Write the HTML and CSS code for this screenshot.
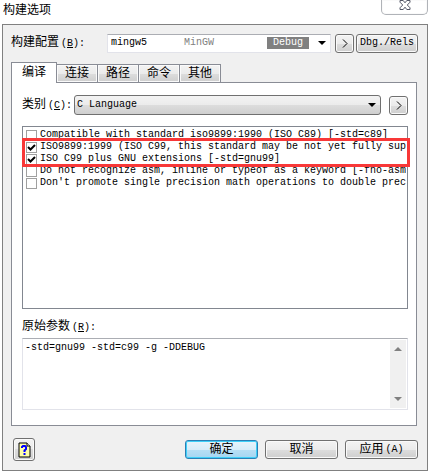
FILE: index.html
```html
<!DOCTYPE html>
<html lang="zh-CN">
<head>
    <meta charset="UTF-8">
    <meta name="viewport" content="width=device-width, initial-scale=1.0">
    <title>构建选项</title>
    <link rel="stylesheet" href="styles.css">
</head>
<body>
    <header class="titlebar">
        <h1>构建选项</h1>
        <button class="close-btn" aria-label="关闭">
            <svg width="12" height="10" viewBox="0 0 12 10">
                <path d="M1 .5h3.2L6 2.8 7.800.5H11v1.700L8.300 5 11 7.800v1.700H7.800L6 7.200 4.200 9.500H1V7.800L3.700 5 1 2.200z" fill="#fff" stroke="#535666"/>
            </svg>
        </button>
    </header>

    <main class="dialog">
        <div class="config-row">
            <label for="config">构建配置<span class="latin">(<u>B</u>):</span></label>
            <div class="config-combo">
                <select id="config">
                    <option>mingw5</option>
                </select>
                <div class="combo-info">
                    <span class="compiler">MinGW</span>
                    <span class="badge">Debug</span>
                    <svg class="arrow" width="8" height="4" viewBox="0 0 8 4"><path d="M0 0h8L4 4z"/></svg>
                </div>
            </div>
            <button class="more-btn" aria-label="更多"><svg width="6" height="9" viewBox="0 0 6 9"><path d="M1 .5l4 4-4 4" fill="none" stroke="#000"/></svg></button>
            <button class="toggle-btn">Dbg./Rels</button>
        </div>

        <div class="tabs" role="tablist">
            <button class="tab active" role="tab" aria-selected="true">编译</button>
            <button class="tab" role="tab">连接</button>
            <button class="tab" role="tab">路径</button>
            <button class="tab" role="tab">命令</button>
            <button class="tab" role="tab">其他</button>
        </div>

        <section class="panel" role="tabpanel">
            <div class="category-row">
                <label for="category">类别<span class="latin">(<u>C</u>):</span></label>
                <div class="category-combo">
                    <select id="category">
                        <option>C Language</option>
                    </select>
                    <div class="combo-info">
                        <svg class="arrow" width="8" height="4" viewBox="0 0 8 4"><path d="M0 0h8L4 4z"/></svg>
                    </div>
                </div>
                <button class="more-btn" aria-label="更多"><svg width="6" height="9" viewBox="0 0 6 9"><path d="M1 .5l4 4-4 4" fill="none" stroke="#000"/></svg></button>
            </div>

            <div class="options">
                <label class="option"><input type="checkbox"><span>Compatible with standard iso9899:1990 (ISO C89) [-std=c89]</span></label>
                <label class="option"><input type="checkbox" checked><span>ISO9899:1999 (ISO C99, this standard may be not yet fully sup</span></label>
                <label class="option"><input type="checkbox" checked><span>ISO C99 plus GNU extensions [-std=gnu99]</span></label>
                <label class="option"><input type="checkbox"><span>Do not recognize asm, inline or typeof as a keyword [-fno-asm</span></label>
                <label class="option"><input type="checkbox"><span>Don't promote single precision math operations to double prec</span></label>
                <div class="highlight"></div>
            </div>

            <label class="params-label" for="params">原始参数<span class="latin">(<u>R</u>):</span></label>
            <div class="params">
                <textarea id="params" spellcheck="false">-std=gnu99 -std=c99 -g -DDEBUG</textarea>
                <div class="scrollbar">
                    <svg width="8" height="4" viewBox="0 0 8 4"><path d="M0 4h8L4 0z"/></svg>
                    <svg width="8" height="4" viewBox="0 0 8 4"><path d="M0 0h8L4 4z"/></svg>
                </div>
            </div>
        </section>

        <footer class="actions">
            <button class="help-btn" aria-label="帮助">
                <svg width="13" height="16" viewBox="0 0 13 16">
                    <path d="M1 1h8l3 3v11H1z" fill="#ffffa8" stroke="#000"/>
                    <path d="M9 1v3h3" fill="#fff" stroke="#000"/>
                    <path d="M4 6V5l1-1h2l1 1v2L6.500 8.500V10M6.500 11v2" fill="none" stroke="#00f" stroke-width="2"/>
                </svg>
            </button>
            <button class="action primary">确定</button>
            <button class="action">取消</button>
            <button class="action">应用<span class="latin">(A)</span></button>
        </footer>
    </main>
</body>
</html>
```
FILE: styles.css
```css
* {
    box-sizing: border-box;
}

body {
    margin: 0;
    padding: 0 2px 2px;
    background: #fff;
    color: #000;
    font-family: "Liberation Mono", "Noto Sans CJK SC", monospace;
    font-size: 12px;
    line-height: 16px;
}

button, select, textarea {
    margin: 0;
    color: inherit;
    font: inherit;
}

button {
    display: flex;
    align-items: center;
    justify-content: center;
    padding: 0;
    border: 1px solid #707070;
    border-radius: 3px;
    background: linear-gradient(#f3f3f3, #ebebeb 50%, #dddddd 50%, #cfcfcf);
    box-shadow: inset 0 0 0 1px #fafafa;
}

select {
    width: 100%;
    appearance: none;
    font-size: 10px;
}

.latin {
    font-size: 10px;
    margin-left: 2px;
}

/* Title bar */
.titlebar {
    display: flex;
    justify-content: space-between;
    height: 24px;
}

h1 {
    margin: 3px 1px;
    font-size: 12px;
    font-weight: normal;
}

.close-btn {
    width: 47px;
    height: 15px;
    align-items: flex-start;
    border-color: #b0b3b8;
    border-top: 0;
    border-radius: 0 0 5px 5px;
    background: #fff;
}

/* Dialog */
.dialog {
    padding: 8px 10px 9px 8px;
    border: 1px solid #808080;
    background: #f0f0f0;
}

.config-row {
    display: flex;
    align-items: center;
    height: 20px;
    margin-right: -1px;
}

.config-row label {
    width: 96px;
}

.config-combo, .category-combo {
    display: grid;
    flex: 1;
    min-width: 0;
}

.config-combo select, .category-combo select, .combo-info {
    grid-area: 1 / 1;
}

.config-combo select {
    height: 19px;
    padding: 0 3px;
    border: 1px solid #e2e3ea;
    border-top-color: #abadb3;
    border-radius: 0;
    background: #fff;
}

.combo-info {
    display: flex;
    align-items: center;
    padding-right: 5px;
    font-size: 10px;
    line-height: 12px;
    pointer-events: none;
}

.compiler {
    margin-left: 77px;
    color: #808080;
}

.badge {
    margin-left: auto;
    margin-right: 9px;
    padding: 0 6px;
    background: #808080;
    color: #fff;
}

.category-combo .arrow {
    margin-left: auto;
}

.more-btn {
    width: 19px;
    height: 19px;
    margin-left: 4px;
}

.toggle-btn {
    width: 62px;
    height: 19px;
    margin-left: 2px;
    font-size: 10px;
}

/* Tabs */
.tabs {
    display: flex;
    align-items: flex-end;
    margin-top: 9px;
}

.tab {
    width: 41px;
    height: 18px;
    border: 1px solid #898c95;
    border-left: 0;
    border-bottom: 0;
    border-radius: 0;
}

.tab.active {
    z-index: 1;
    width: 46px;
    height: 21px;
    margin-bottom: -1px;
    border-left: 1px solid #898c95;
    background: #fff;
    box-shadow: none;
}

.panel {
    padding: 12px 8px 15px 10px;
    border: 1px solid #898c95;
    background: #fff;
}

.category-row {
    display: flex;
    align-items: center;
}

.category-row label {
    width: 52px;
}

.category-combo select {
    height: 20px;
    padding: 0 2px;
    border: 1px solid #707070;
    border-radius: 3px;
    background: linear-gradient(#f3f3f3, #ebebeb 50%, #dddddd 50%, #cfcfcf);
}

.category-row .more-btn {
    margin-left: 8px;
}

/* Option list */
.options {
    position: relative;
    height: 183px;
    margin-top: 11px;
    padding: 2px 1px 2px 3px;
    border: 1px solid #828790;
}

.option {
    display: flex;
    align-items: center;
    height: 12px;
    font-size: 10px;
    line-height: 12px;
    white-space: nowrap;
}

.option span {
    overflow: hidden;
}

.option input {
    flex: none;
    width: 11px;
    height: 11px;
    margin: 0 3px 0 0;
    appearance: none;
    border: 1px solid #a0a0a0;
    background: #fff;
}

.option input:checked {
    background: #fff url("data:image/svg+xml,%3Csvg xmlns='http://www.w3.org/2000/svg' viewBox='0 0 9 9'%3E%3Cpath d='M1 4l2.500 2.500L8 2' fill='none' stroke='black' stroke-width='2'/%3E%3C/svg%3E");
}

/* Red frame around the C99 entries */
.highlight {
    position: absolute;
    top: 11px;
    right: -3px;
    left: -1px;
    height: 29px;
    border: 3px solid #f83838;
    pointer-events: none;
}

.params-label {
    display: block;
    margin-top: 10px;
}

.params {
    display: flex;
    height: 72px;
    margin-top: 2px;
    padding: 1px;
    border: 1px solid #e2e3ea;
    border-top-color: #abadb3;
}

textarea {
    flex: 1;
    min-width: 0;
    padding: 2px 1px;
    border: 0;
    outline: 0;
    resize: none;
    overflow: hidden;
    background: #fff;
    font-size: 10px;
    line-height: 12px;
}

.scrollbar {
    display: flex;
    flex-direction: column;
    align-items: center;
    justify-content: space-between;
    width: 16px;
    padding: 7px 0;
    background: #f0f0f0;
    fill: #808080;
}

/* Bottom buttons */
.actions {
    display: flex;
    align-items: center;
    gap: 7px;
    margin: 12px -1px 0 2px;
}

.help-btn {
    width: 22px;
    height: 23px;
    margin-right: auto;
}

.action {
    width: 73px;
    height: 19px;
}

.action.primary {
    border-color: #2c7fb5;
    background: linear-gradient(#e8f4fb, #d8edf9 50%, #b8dff5 50%, #a5d6f2);
    box-shadow: inset 0 0 0 1px #3fd0f8;
}
```
